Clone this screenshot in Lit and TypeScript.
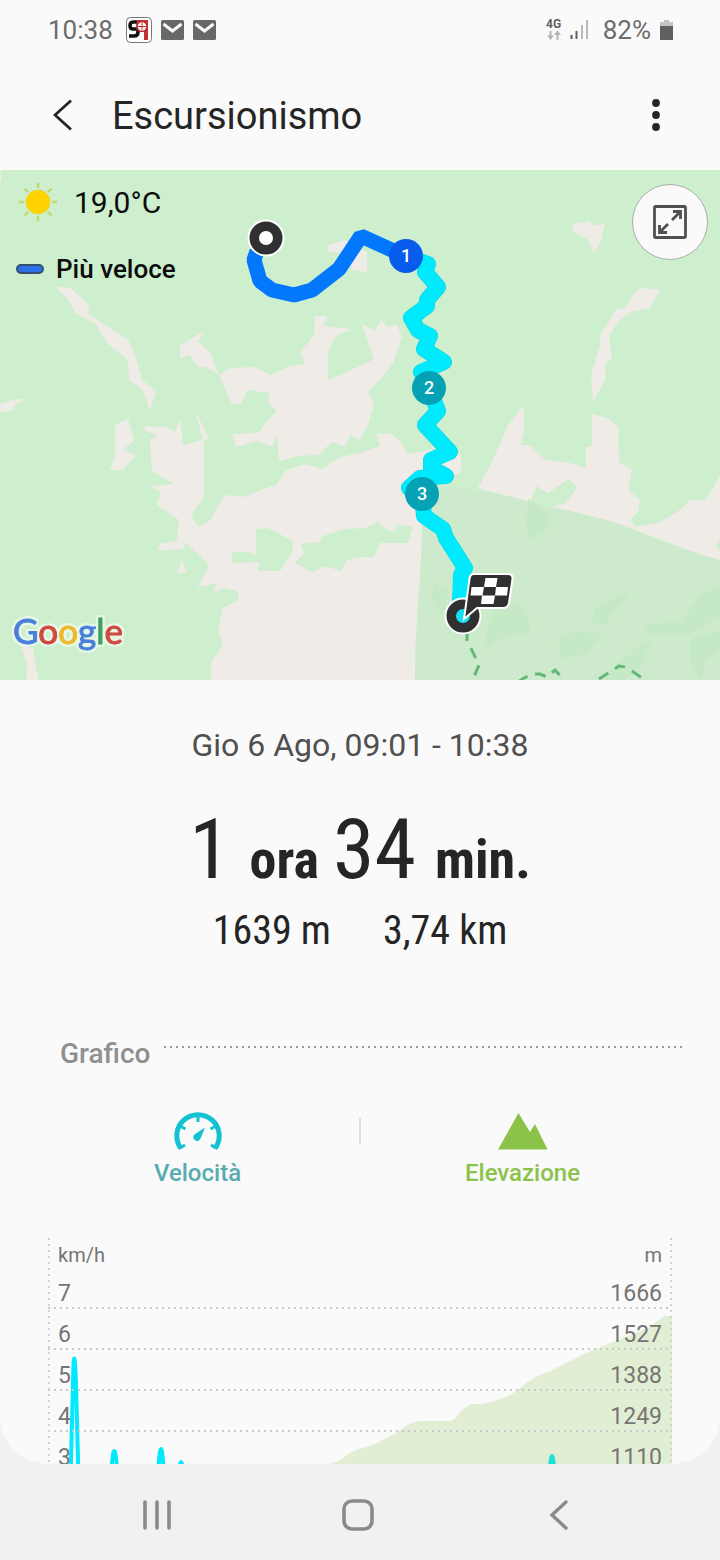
import { LitElement, html, css, svg } from "lit";
import { customElement } from "lit/decorators.js";

const LAND = [
  "0,170 2,180 0,183",
  "55,286 70,288 82,298 90,308 88,314 110,328 128,340 134,352 142,380 156,391 150,410 143,390 129,380 128,360 108,344 95,323 76,314 68,300",
  "0,404 12,400 25,399 14,405 13,411 0,412",
  "115,425 128,419 134,440 124,449 135,456 123,470 110,470 115,455",
  "180,346 204,331 198,342 210,352 219,375 230,368 255,367 271,375 290,366 305,364 300,352 314,335 315,316 328,316 323,326 352,329 338,335 333,340 328,355 328,380 360,366 374,359 362,324 375,331 381,320 388,327 397,325 402,337 393,363 386,373 368,392 374,404 368,425 360,440 350,435 345,447 332,442 318,455 298,456 279,461 277,434 273,447 258,441 236,447 232,434 258,433 270,418 277,411 268,403 270,393 248,390 241,404 232,404 219,375 206,367 198,367 190,355 180,358",
  "211,680 211,663 223,645 218,630 223,608 238,600 238,592 225,588 213,592 217,583 198,587 209,565 185,542 183,549 157,551 160,544 177,541 179,520 157,505 161,492 150,486 174,484 152,471 150,440 158,436 144,430 145,426 165,427 175,432 180,418 183,445 203,440 196,413 205,430 209,438 204,441 204,498 191,515 198,527 211,520 224,495 243,497 277,484 286,470 306,464 322,469 340,457 360,453 380,446 376,434 390,433 399,440 408,454 430,450 455,452 461,455 461,472 452,477 440,490 423,490 421,560 415,650 415,680",
  "182,560 187,573 177,573",
  "20,645 33,648 35,662 39,680 26,680 27,663",
  "328,245 345,240 355,245 367,252 367,272 352,270 345,254 328,252",
  "572,224 590,221 593,226 605,223 600,244 594,253 588,240 573,231",
  "642,288 660,290 650,308 630,312 620,320 609,335 612,360 606,362 605,380 593,402 591,375 600,345 600,335 616,310 625,308 635,292",
  "478,488 490,466 508,425 524,405 524,432 520,445 530,445 545,460 570,463 586,468 586,447 592,446 592,414 607,418 618,427 619,462 632,470 628,490 640,500 638,512 630,520 636,527 660,522 680,510 690,500 705,500 712,490 720,475 720,540 716,545 720,552 720,562 640,532 560,510",
];

const WOOD = [
  "256,529 268,528 293,541 292,552 280,571 258,571 259,562 232,563 232,552 250,552 256,556",
  "301,544 320,542 323,536 345,529 366,528 378,522 384,528 394,532 398,525 413,527 408,543 380,543 374,557 360,557 347,560 341,571 324,566 312,573 295,562 304,554",
  "536,486 548,493 569,479 577,488 565,503 549,508 530,504",
];

const THICKET = [
  "528,498 540,507 549,516 546,530 532,541 526,530",
  "434,582 448,590 446,604 440,614 432,598",
  "496,608 520,604 528,616 530,634 512,634 498,640 484,652 488,624",
  "604,602 630,592 622,604 610,612 608,624 592,624 594,610",
  "562,634 580,632 602,634 588,654 562,658 558,648",
  "646,624 680,622 700,596 720,584 720,616 690,634 648,634",
  "640,645 652,640 640,668 624,680 600,680 622,660",
  "690,640 720,630 720,648 706,660 700,680 690,662",
];

const BLUE = "257,251 254,260 260,281 272,290 294,295 312,290 339,269 361,236 405,256";
const CYAN =
  "405,256 428,264 425,272 438,287 427,300 427,306 411,318 418,330 430,336 424,349 444,362 421,372 429,388 438,411 425,425 450,452 431,460 431,468 446,476 420,478 409,488 422,494 424,516 443,529 446,538 465,568 461,575 460,604";

const poly = (cls: string) => (p: string) => svg`<polygon class=${cls} points=${p}></polygon>`;

const pin = (x: number, y: number, n: number, first = false) => svg`
  <circle class=${first ? "pin first" : "pin"} cx=${x} cy=${y} r="17"></circle>
  <text class="pin-no" x=${x} y=${y + 6}>${n}</text>`;

@customElement("route-map")
export class RouteMap extends LitElement {
  static styles = css`
    :host { display: block; position: relative; height: 510px; overflow: hidden; background: #cdefce; color: #0c0c0c; }
    .map { display: block; width: 100%; height: 100%; }
    .land { fill: #efebe7; }
    .wood { fill: #cdefce; }
    .park { fill: #cdebcc; }
    .thicket { fill: #c2e8c0; opacity: 0.7; }
    .trail { fill: none; stroke: #63b878; stroke-width: 3; stroke-dasharray: 11 8; }
    .route { fill: none; stroke-width: 15; stroke-linejoin: round; stroke-linecap: round; }
    .edge { stroke-width: 16; stroke: #14d3e2; }
    .blue { stroke: #0478fc; stroke-linejoin: bevel; stroke-linecap: butt; }
    .cyan { stroke: #00e9fd; }
    .pin { fill: #04a2b4; }
    .first { fill: #085ceb; }
    .pin-no { fill: #fff; font: 500 18px Roboto, sans-serif; text-anchor: middle; }
    .dark { fill: #303030; stroke: #fff; stroke-width: 2; }
    .white { fill: #fff; }
    .core { fill: #14dff2; }
    .google { font: 400 35px Lato, sans-serif; stroke-width: 1; filter: drop-shadow(2px 0 0 #e6f7e6) drop-shadow(-2px 0 0 #e6f7e6) drop-shadow(0 2px 0 #e6f7e6) drop-shadow(0 -2px 0 #e6f7e6); }
    .g-blue { fill: #4a80dc; stroke: #4a80dc; }
    .g-red { fill: #d04a40; stroke: #d04a40; }
    .g-yellow { fill: #ecba2c; stroke: #ecba2c; }
    .g-green { fill: #3fa05a; stroke: #3fa05a; }
    .info { position: absolute; top: 12px; left: 16px; }
    .weather { display: flex; align-items: center; gap: 16px; height: 40px; padding-left: 2px; font-size: 30px; }
    .legend { display: flex; align-items: center; gap: 12px; height: 40px; margin-top: 27px; font-size: 26px; font-weight: 500; }
    .swatch { width: 24px; height: 6px; border: 2px solid #34506e; border-radius: 6px; background: #2a70e6; }
    .expand { position: absolute; top: 14px; right: 12px; width: 76px; height: 76px; padding: 0; display: grid; place-items: center;
      border: 1px solid #a9aca9; border-radius: 50%; background: #fafafa; }
  `;

  render() {
    return html`
      <svg class="map" viewBox="0 170 720 510" preserveAspectRatio="xMidYMid slice" role="img" aria-label="Percorso">
        ${LAND.map(poly("land"))}
        ${WOOD.map(poly("wood"))}
        <path class="park" d="M423 490 L440 485 Q500 492 540 505 Q600 516 636 530 Q670 546 720 560 V680 H415 Q416 620 421 570 Z"></path>
        ${THICKET.map(poly("thicket"))}
        <path class="trail" d="M467 630 V640 L479 665 L471 684"></path>
        <path class="trail" d="M518 682 Q530 673 540 674 L547 677 L555 670 L566 682"></path>
        <path class="trail" d="M599 679 L619 666 L626 667 L648 682"></path>
        <polyline class="route edge" points=${CYAN}></polyline>
        <polyline class="route cyan" points=${CYAN}></polyline>
        <polyline class="route blue" points=${BLUE}></polyline>
        ${pin(406, 256, 1, true)} ${pin(429, 388, 2)} ${pin(422, 494, 3)}
        <circle class="dark" cx="266" cy="238" r="17.5"></circle>
        <circle class="white" cx="266" cy="238" r="7"></circle>
        <circle class="dark" cx="463" cy="616" r="17.5"></circle>
        <circle class="core" cx="463" cy="616" r="7"></circle>
        <path class="dark" d="M474 574 H508 Q513 574 512.500 579 L509 603 Q508 608 503 608 H477 L464 619 L469.500 579 Q470 574 474 574 Z"></path>
        <path class="white" d="M485.500 578 H497.500 L496 587 H508 L507 595.500 H495 L493.500 604 H481 L482 595.500 H470.500 L471.500 587 H484 Z"></path>
        <path d="M484 587 H496 L495 595.500 H482.500 Z" fill="#303030"></path>
        <text class="google" x="13" y="644"><tspan class="g-blue">G</tspan><tspan class="g-red">o</tspan><tspan class="g-yellow">o</tspan><tspan class="g-blue">g</tspan><tspan class="g-green">l</tspan><tspan class="g-red">e</tspan></text>
      </svg>
      <div class="info">
        <div class="weather">
          <svg width="40" height="40" viewBox="0 0 40 40">
            <g stroke="#c3d772" stroke-width="2.600">
              ${[0, 45, 90, 135, 180, 225, 270, 315].map((a) => svg`<path d="M20 1 V6" transform="rotate(${a} 20 20)"></path>`)}
            </g>
            <circle cx="20" cy="20" r="12" fill="#ffd200" stroke="#e3d63c"></circle>
          </svg>
          <span>19,0°C</span>
        </div>
        <div class="legend"><span class="swatch"></span><span>Più veloce</span></div>
      </div>
      <button class="expand" aria-label="Espandi mappa">
        <svg width="34" height="34" viewBox="0 0 34 34" fill="none" stroke="#505050" stroke-width="2.800">
          <rect x="1.500" y="1.500" width="31" height="31" rx="1"></rect>
          <path d="M19 15 L27 7 M20 6.500 H27.500 V14 M15 19 L7 27 M6.500 20 V27.500 H14"></path>
        </svg>
      </button>
    `;
  }
}

const ROWS: [string, string][] = [["7", "1666"], ["6", "1527"], ["5", "1388"], ["4", "1249"], ["3", "1110"]];

@customElement("activity-chart")
export class ActivityChart extends LitElement {
  static styles = css`
    :host { display: block; position: relative; margin: 0 48px; color: #757575; }
    .plot { position: absolute; inset: 0; width: 100%; height: 100%; }
    .grid { stroke: #c8cac7; stroke-width: 2; stroke-dasharray: 2 4; }
    .side { stroke: #d2d2d2; stroke-width: 2; stroke-dasharray: 2 4; }
    .speed { fill: none; stroke: #00e9fd; stroke-width: 4; stroke-linejoin: round; }
    .area { fill: #8bc34a; fill-opacity: 0.22; }
    .labels { position: relative; padding: 0 10px; }
    .row { display: flex; justify-content: space-between; height: 41px; box-sizing: border-box; font-size: 23px; line-height: 31px; }
    .units { height: 40px; padding-top: 4px; font-size: 20px; line-height: 26px; }
  `;

  render() {
    return html`
      <svg class="plot" viewBox="0 0 624 245" preserveAspectRatio="none" aria-hidden="true">
        <path class="speed" d="M22 260 L25 145 Q26 96 28 145 L31 260 M62 260 Q66 166 71 260 M109 260 Q113 162 117 260 M128 260 Q133 188 138 260 M500 260 Q504 176 508 260"></path>
        <path class="area" d="M240 245 L276 227 Q288 225 295 220 Q304 213 313 210 Q324 208 333 203 Q345 197 354 191 Q362 184 372 183 H401 Q405 183 409 178 Q416 168 425 166 H434 Q448 163 460 158 Q468 154 477 146 Q488 138 504 132 L545 112 Q555 108 560 106 L600 90 L616 78 H624 V245 Z"></path>
        ${[70, 111, 152, 193, 234].map((y) => svg`<path class="grid" d="M0 ${y} H624"></path>`)}
        <path class="side" d="M1 0 V245 M623 0 V245"></path>
      </svg>
      <div class="labels">
        <div class="row units"><span>km/h</span><span>m</span></div>
        ${ROWS.map(([s, m]) => html`<div class="row"><span>${s}</span><span>${m}</span></div>`)}
      </div>
    `;
  }
}

const mail = html`
  <svg width="23" height="20" viewBox="0 0 23 20">
    <rect width="23" height="20" rx="1.500" fill="#686868"></rect>
    <path d="M2.500 4 L11.500 11 L20.500 4" fill="none" stroke="#fafafa" stroke-width="3"></path>
  </svg>`;

@customElement("app-root")
export class AppRoot extends LitElement {
  static styles = css`
    :host { display: flex; flex-direction: column; height: 100vh; background: #f1f1f1; color: #252525; font-family: Roboto, sans-serif; }
    main { flex: 1; min-height: 0; overflow: hidden; background: #fafafa; border-radius: 0 0 48px 48px; }
    button { font-family: inherit; color: inherit; border: 0; background: none; padding: 0; margin: 0; }
    svg { display: block; }
    .status { display: flex; align-items: center; justify-content: space-between; height: 60px; padding: 0 47px 0 48px; font-size: 26px; color: #6c6c6c; }
    .group { display: flex; align-items: center; gap: 9px; }
    .clock { margin-right: 4px; }
    .header { display: flex; align-items: center; height: 110px; padding: 0 44px; }
    .back { width: 38px; height: 60px; display: grid; place-items: center; }
    h1 { flex: 1; margin: 2px 0 0 30px; font-size: 38px; line-height: 48px; font-weight: 400; }
    .more { width: 40px; height: 60px; display: grid; place-items: center; }
    .summary { display: flex; flex-direction: column; align-items: center; padding-top: 44px; }
    .date { font-size: 32px; line-height: 42px; color: #505050; }
    .time { display: flex; align-items: baseline; margin-top: 38px; font-family: "Roboto Condensed", Roboto, sans-serif; line-height: 92px; }
    .num { font-size: 84px; }
    .unit { font-size: 54px; font-weight: 700; margin: 0 14px 0 19px; }
    .last { margin-right: 0; }
    .totals { display: flex; gap: 52px; font-family: "Roboto Condensed", Roboto, sans-serif; font-size: 40px; line-height: 50px; }
    .section { display: flex; align-items: center; gap: 14px; padding: 0 38px 0 60px; margin-top: 80px; }
    h2 { margin: 0; font-size: 28px; line-height: 36px; font-weight: 500; color: #8f8f8f; }
    .dots { flex: 1; height: 2px; margin-bottom: 14px; background: repeating-linear-gradient(90deg, #9a9a9a 0 2px, transparent 2px 6px); }
    .tabs { display: grid; grid-template-columns: 1fr 2px 1fr; margin: 40px 36px 50px; }
    .tab { display: flex; flex-direction: column; align-items: center; gap: 8px; font-size: 24px; line-height: 30px; font-weight: 500; }
    .speed { color: #58abb0; }
    .elev { color: #8bc34a; }
    .rule { height: 26px; margin-top: 6px; background: #dedede; }
    nav { display: flex; align-items: center; justify-content: space-around; height: 96px; padding: 6px 60px 0 56px; box-sizing: border-box; }
    .key { width: 120px; height: 60px; display: grid; place-items: center; }
  `;

  render() {
    return html`
      <main>
        <div class="status">
          <div class="group">
            <span class="clock">10:38</span>
            <svg width="26" height="26" viewBox="0 0 26 26">
              <rect x="0.500" y="0.500" width="25" height="25" rx="4" fill="#fff" stroke="#777"></rect>
              <path d="M13 5 H7 Q4 5 4 8.500 Q4 12 7 12 H12 V15 Q12 19 8 19 H3" fill="none" stroke="#111" stroke-width="3.600"></path>
              <path d="M11 3 H22 V23 H18 V15 H14 Q10 14 10 9 Z" fill="#c42f2f"></path>
              <circle cx="16" cy="9.500" r="4.200" fill="#fff"></circle>
              <path d="M12 9.500 H20 M16 5.500 V13.500" stroke="#c42f2f"></path>
            </svg>
            ${mail} ${mail}
          </div>
          <div class="group">
            <svg width="48" height="24" viewBox="0 0 48 24">
              <text x="0" y="10" font-size="12" font-weight="700" fill="#606060">4G</text>
              <path d="M4.500 13 V19 M11.500 22 V16" stroke="#b4b4b4" stroke-width="2"></path>
              <path d="M1 17.500 H8 L4.500 22 Z M8 17 H15 L11.500 12.500 Z" fill="#b4b4b4"></path>
              <path d="M25.500 21 V17 M30.500 21 V13" stroke="#606060" stroke-width="2"></path>
              <path d="M36 21 V7 M41 21 V2" stroke="#b8b8b8" stroke-width="2"></path>
            </svg>
            <span>82%</span>
            <svg width="13" height="20" viewBox="0 0 13 20">
              <path d="M0 2 H4 V0 H9 V2 H13 V7 H0 Z" fill="#c4c4c4"></path>
              <path d="M0 6 H13 V20 H0 Z" fill="#606060"></path>
            </svg>
          </div>
        </div>
        <header class="header">
          <button class="back" aria-label="Indietro">
            <svg width="20" height="32" viewBox="0 0 20 32"><path d="M18 1.500 L2 16 L18 30.500" fill="none" stroke="#252525" stroke-width="2.800"></path></svg>
          </button>
          <h1>Escursionismo</h1>
          <button class="more" aria-label="Altre opzioni">
            <svg width="8" height="32" viewBox="0 0 8 32" fill="#252525"><circle cx="4" cy="4" r="3.900"></circle><circle cx="4" cy="16" r="3.900"></circle><circle cx="4" cy="28" r="3.900"></circle></svg>
          </button>
        </header>
        <route-map></route-map>
        <section class="summary">
          <div class="date">Gio 6 Ago, 09:01 - 10:38</div>
          <div class="time"><span class="num">1</span><span class="unit">ora</span><span class="num">34</span><span class="unit last">min.</span></div>
          <div class="totals"><span>1639 m</span><span>3,74 km</span></div>
        </section>
        <div class="section"><h2>Grafico</h2><span class="dots"></span></div>
        <div class="tabs">
          <button class="tab speed">
            <svg width="48" height="38" viewBox="0 0 48 38">
              <path d="M7 36.500 A21.200 21.200 0 1 1 41 36.500" fill="none" stroke="#13c2d2" stroke-width="5"></path>
              <path d="M24 4 V10 M7 14.500 L11.500 17 M41 14.500 L36.500 17 M6 36 L11 33 M42 36 L37 33" stroke="#13c2d2" stroke-width="3"></path>
              <path d="M31 15.500 L26.500 26.500 A3.700 3.700 0 1 1 20.500 22.500 Z" fill="#13c2d2"></path>
            </svg>
            Velocità
          </button>
          <span class="rule"></span>
          <button class="tab elev">
            <svg width="50" height="38" viewBox="0 0 50 38"><path d="M0 37.500 L20.500 1 L32 20 L37 12 L49.500 37.500 Z" fill="#8bc34a"></path></svg>
            Elevazione
          </button>
        </div>
        <activity-chart></activity-chart>
      </main>
      <nav>
        <button class="key" aria-label="Recenti">
          <svg width="30" height="32" viewBox="0 0 30 32" stroke="#8a8a8a" stroke-width="3.600" stroke-linecap="round"><path d="M3 3 V29 M15 3 V29 M27 3 V29"></path></svg>
        </button>
        <button class="key" aria-label="Home">
          <svg width="34" height="34" viewBox="0 0 34 34"><rect x="3" y="3" width="28" height="28" rx="8" fill="none" stroke="#8a8a8a" stroke-width="3.600"></rect></svg>
        </button>
        <button class="key" aria-label="Indietro">
          <svg width="20" height="32" viewBox="0 0 20 32"><path d="M17 3 L3 16 L17 29" fill="none" stroke="#8a8a8a" stroke-width="3.400" stroke-linecap="round"></path></svg>
        </button>
      </nav>
    `;
  }
}
